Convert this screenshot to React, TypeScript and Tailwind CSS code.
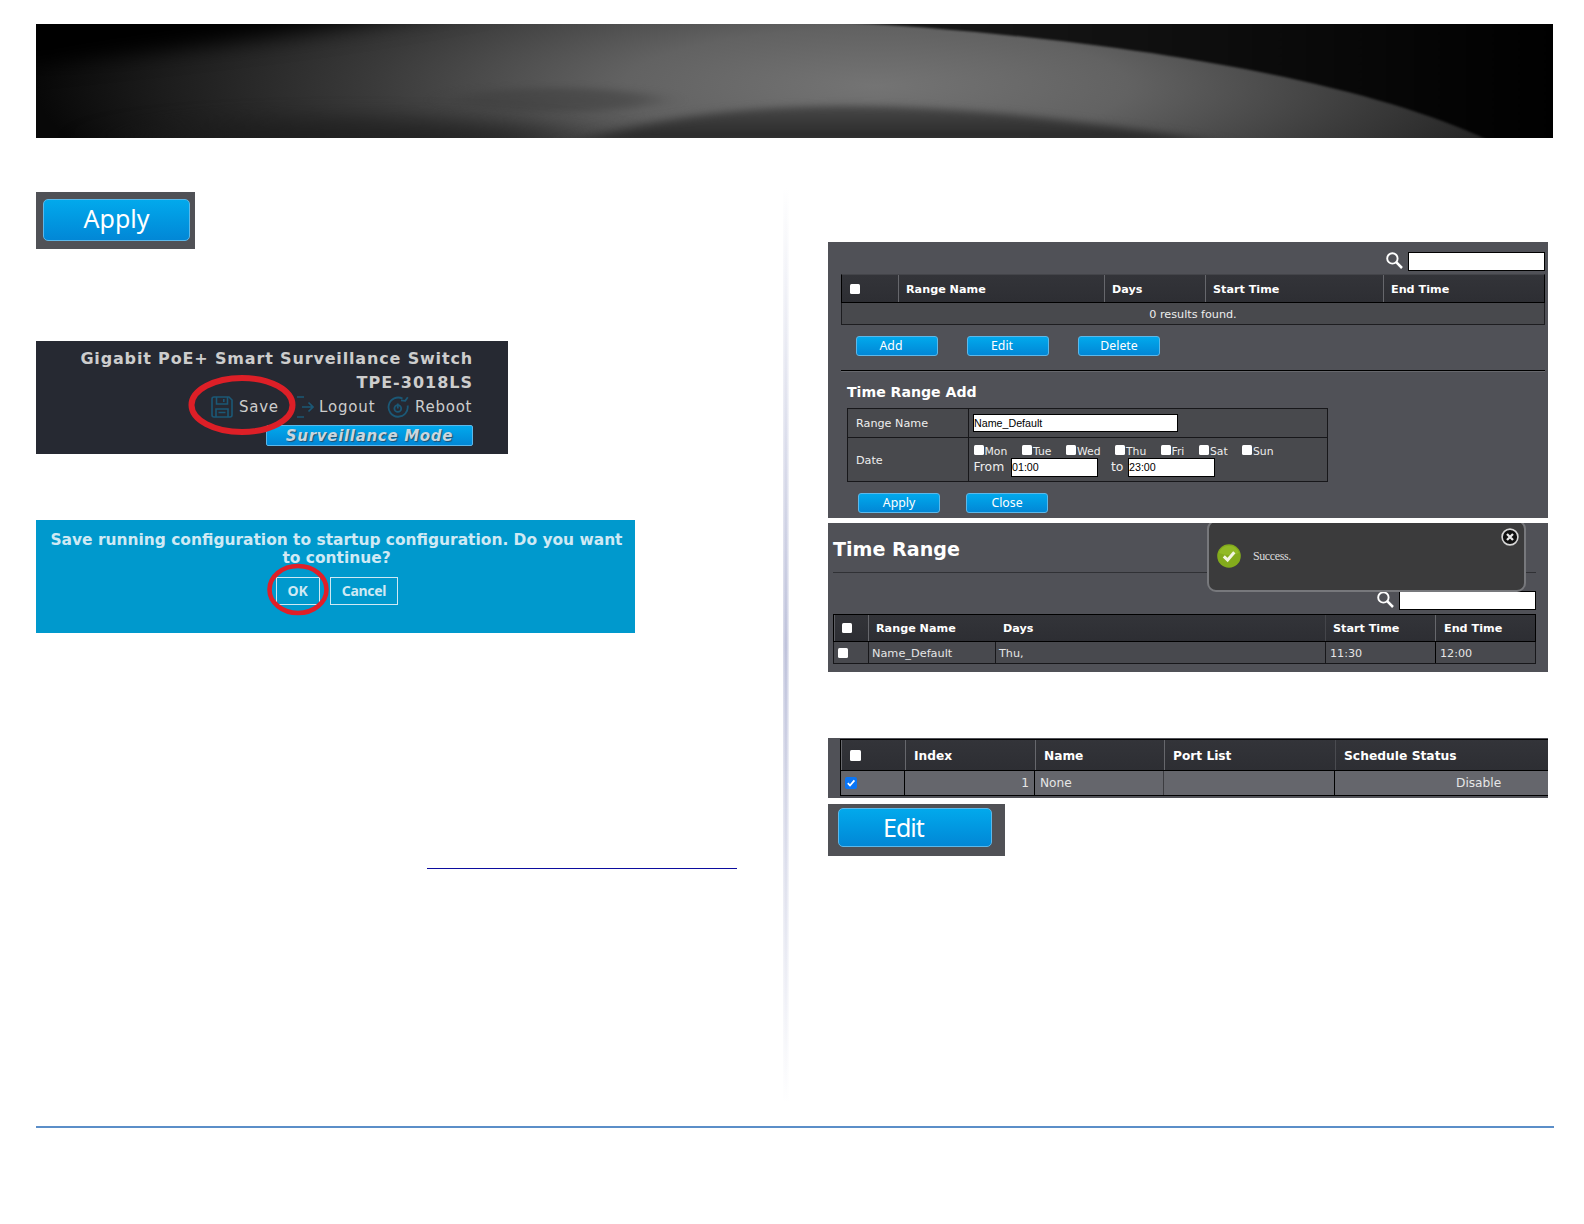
import React from 'react';
import clsx from 'clsx';

const gloss = 'bg-linear-to-b from-[#02a9ec] to-[#0287d6] border-[#5cb8ea] text-white';
const verdana = "font-['DejaVu_Sans',sans-serif]";
const tahoma = "font-['Noto_Sans',sans-serif]";

interface BoxProps {
  className?: string;
  children?: React.ReactNode;
}

// small blue action button
const ActionButton: React.FC<BoxProps> = ({ className, children }) => (
  <button
    className={clsx('flex h-[20px] w-[82px] items-center justify-center rounded-[3px] border text-[12.3px] leading-none', tahoma, gloss, className)}
  >
    {children}
  </button>
);

const Check: React.FC<BoxProps> = ({ className }) => (
  <span className={clsx('block h-[10px] w-[10px] shrink-0 rounded-[1.5px] bg-white', className)} />
);

const Field: React.FC<BoxProps> = ({ className, children }) => (
  <div
    className={clsx("flex items-center border border-black bg-white font-['Liberation_Sans',sans-serif] text-[10.7px] leading-none text-black", className)}
  >
    {children}
  </div>
);

const SearchIcon: React.FC<BoxProps> = ({ className }) => (
  <svg viewBox="0 0 17 17" className={clsx('h-[17px] w-[17px] shrink-0', className)} fill="none" stroke="#fff">
    <circle cx="6.4" cy="6.4" r="5.2" strokeWidth="1.9" />
    <path d="M10.2 10.2 L16 16" strokeWidth="2.5" />
  </svg>
);

const Banner = () => (
  <svg viewBox="0 0 1517 114" className="block h-[114px] w-[1517px] bg-black" preserveAspectRatio="none">
    <defs>
      <radialGradient id="glow" gradientUnits="userSpaceOnUse" cx="0" cy="0" r="1" gradientTransform="translate(840 62) scale(840 190)">
        <stop offset="0" stopColor="#747474" />
        <stop offset="0.3" stopColor="#626262" />
        <stop offset="0.6" stopColor="#3a3a3a" />
        <stop offset="0.85" stopColor="#1c1c1c" />
        <stop offset="1" stopColor="#080808" />
      </radialGradient>
      <linearGradient id="corner" x1="0" y1="0" x2="1" y2="0">
        <stop offset="0" stopColor="#1c1c1c" />
        <stop offset="0.5" stopColor="#0e0e0e" />
        <stop offset="1" stopColor="#000" />
      </linearGradient>
      <linearGradient id="hill" x1="0" y1="0" x2="0" y2="1">
        <stop offset="0" stopColor="#484848" />
        <stop offset="1" stopColor="#262626" />
      </linearGradient>
      <filter id="soft1" x="-20%" y="-50%" width="140%" height="200%" colorInterpolationFilters="sRGB">
        <feGaussianBlur stdDeviation="1.2" />
      </filter>
      <filter id="soft4" x="-40%" y="-100%" width="180%" height="300%" colorInterpolationFilters="sRGB">
        <feGaussianBlur stdDeviation="16 3.5" />
      </filter>
      <filter id="soft12" x="-40%" y="-150%" width="180%" height="400%" colorInterpolationFilters="sRGB">
        <feGaussianBlur stdDeviation="40 10" />
      </filter>
    </defs>
    <rect width="1517" height="114" fill="url(#glow)" />
    <path d="M-80 -40 H500 C350 2 180 22 -80 48 Z" fill="#000" filter="url(#soft12)" />
    <ellipse cx="520" cy="76" rx="100" ry="12" fill="#3c3c3c" opacity="0.5" filter="url(#soft4)" />
    <ellipse cx="320" cy="114" rx="220" ry="20" fill="#1c1c1c" opacity="0.7" filter="url(#soft12)" />
    <path d="M540 118 C680 72 890 68 1180 118 Z" fill="url(#hill)" filter="url(#soft4)" />
    <path d="M785 -3 C1080 12 1330 58 1452 116 H1530 V-3 Z" fill="url(#corner)" filter="url(#soft1)" />
  </svg>
);

const SwitchHeader = () => (
  <div className={clsx('relative mt-[92px] h-[113px] w-[472px] bg-[#262932] pr-[35px] text-[#cdcdcd]', verdana)}>
    <div className="pt-[6px] text-right text-[16px] leading-[24px] font-bold">
      <div className="tracking-[0.84px]">Gigabit PoE+ Smart Surveillance Switch</div>
      <div className="tracking-[1px]">TPE-3018LS</div>
    </div>
    <div className="flex h-[24px] items-center justify-end text-[15px] leading-none">
      <svg viewBox="0 0 22 22" className="mr-[6px] h-[22px] w-[22px]" fill="none" stroke="#1b5876" strokeWidth="1.6">
        <path d="M4 1 H18 L21 4 V19 Q21 21 19 21 H3 Q1 21 1 19 V3 Q1 1 3 1 Z" />
        <path d="M5.5 1 V8 H16.5 V1 M12.8 3 V6 M5 21 V13 H17 V21 M7.5 16.5 H14.5" />
      </svg>
      <span className="w-[57px] tracking-[0.75px]">Save</span>
      <svg viewBox="0 0 18 22" className="mr-[5px] h-[22px] w-[18px]" fill="none" stroke="#1b5876" strokeWidth="1.7">
        <path d="M1 1 H8 M1 21 H8 M6 11 H17 M12.5 6.5 L17 11 L12.5 15.5" />
      </svg>
      <span className="w-[68px] tracking-[0.85px]">Logout</span>
      <svg viewBox="0 0 22 22" className="mr-[6px] h-[22px] w-[22px]" fill="none" stroke="#1b5876" strokeWidth="1.8">
        <path d="M15.5 2.6 A9.6 9.6 0 1 0 20.6 9.5" />
        <path d="M20.8 1.2 L18.2 4.8 L14 4.4" />
        <circle cx="10.8" cy="12.5" r="3.4" />
        <path d="M10.8 7.5 V12.5" />
      </svg>
      <span className="w-[58px] tracking-[0.75px]">Reboot</span>
    </div>
    <button className={clsx('mt-[6px] ml-auto flex h-[21px] w-[207px] items-center justify-center rounded-[2px] border', gloss)}>
      <span className="pt-px text-[15px] leading-none font-bold tracking-[0.7px] text-[#c9d6de] italic [text-shadow:1px_1px_1px_#22506e]">
        Surveillance Mode
      </span>
    </button>
    <svg viewBox="0 0 110 62" className="absolute top-[33px] left-[151px] h-[62px] w-[110px]" fill="none">
      <ellipse cx="55" cy="31" rx="50.5" ry="27" stroke="#dd1f27" strokeWidth="6" />
    </svg>
  </div>
);

const SaveDialog = () => (
  <div className={clsx('relative mt-[66px] h-[113px] w-[599px] bg-[#0099cd] pt-[11px] text-center font-bold text-[#cfe9f4]', verdana)}>
    <div className="pl-[2px] text-[15.45px] leading-[18px] whitespace-nowrap">
      Save running configuration to startup configuration. Do you want
      <br />
      to continue?
    </div>
    <div className={clsx('mt-[10px] flex gap-[10px] pl-[240px] text-[14px] tracking-[-0.3px]', tahoma)}>
      <button className="h-[28px] w-[44px] border border-[#cfe9f4] pr-px leading-none">OK</button>
      <button className="h-[28px] w-[68px] border border-[#cfe9f4] leading-none">Cancel</button>
    </div>
    <svg viewBox="0 0 64 54" className="absolute top-[43px] left-[230px] h-[54px] w-[64px]" fill="none">
      <ellipse cx="32" cy="26.5" rx="28.5" ry="23.5" stroke="#e01f28" strokeWidth="4.6" />
    </svg>
  </div>
);

const days = [
  { name: 'Mon', width: 'w-[48.5px]' },
  { name: 'Tue', width: 'w-[44px]' },
  { name: 'Wed', width: 'w-[49px]' },
  { name: 'Thu', width: 'w-[45.5px]' },
  { name: 'Fri', width: 'w-[38.5px]' },
  { name: 'Sat', width: 'w-[43px]' },
  { name: 'Sun', width: 'w-[40px]' },
];

const headRow = 'flex border border-black bg-linear-to-b from-[#333439] to-[#2d2e33] font-bold text-white';

const TimeRangeAdd = () => (
  <div className={clsx('h-[276px] w-[720px] bg-[#505157] pt-[10px] pl-[13px] text-[11.2px] leading-none text-[#eee]', verdana)}>
    <div className="flex h-[22px] w-[704px] justify-end">
      <SearchIcon className="mr-[5px]" />
      <Field className="h-[19px] w-[137px]" />
    </div>
    <div className="w-[704px]">
      <div className={clsx(headRow, 'h-[29px] items-stretch border-t-[#44454a]')}>
        <div className="flex w-[56px] items-center pl-[8px]"><Check /></div>
        <div className="flex w-[206px] items-center border-l border-[#66676c] pt-[2px] pl-[7px]">Range Name</div>
        <div className="flex w-[101px] items-center border-l border-[#66676c] pt-[2px] pl-[7px]">Days</div>
        <div className="flex w-[178px] items-center border-l border-[#66676c] pt-[2px] pl-[7px]">Start Time</div>
        <div className="flex items-center border-l border-[#66676c] pt-[2px] pl-[7px]">End Time</div>
      </div>
      <div className="flex h-[22px] items-center justify-center border border-t-0 border-[#1d1d20] bg-[#48494d] pt-[2px]">0 results found.</div>
    </div>
    <div className="mt-[11px] flex gap-[29px] pl-[15px]">
      <ActionButton className="pr-[12px]">Add</ActionButton>
      <ActionButton className="pr-[12px]">Edit</ActionButton>
      <ActionButton>Delete</ActionButton>
    </div>
    <div className="mt-[14px] h-[2px] w-[704px] border-t border-b border-t-black border-b-[#66676c]" />
    <h2 className="mt-[12px] ml-[6px] text-[14.1px] leading-[16px] font-bold text-white">Time Range Add</h2>
    <div className="mt-[8px] ml-[6px] w-[481px] border border-[#17171a] bg-[#48494d]">
      <div className="flex h-[29px] border-b border-[#17171a]">
        <div className="flex w-[121px] items-center border-r border-[#17171a] pt-px pl-[8px]">Range Name</div>
        <div className="pt-[5px] pl-[4px]"><Field className="h-[18px] w-[205px]">Name_Default</Field></div>
      </div>
      <div className="flex h-[43px]">
        <div className="flex w-[121px] items-center border-r border-[#17171a] pt-[2px] pl-[8px]">Date</div>
        <div className="pt-[7px] pl-[4.5px]">
          <div className="flex h-[13px] text-[10.8px]">
            {days.map((day) => (
              <div key={day.name} className={clsx('flex', day.width)}>
                <Check className="mr-[1px]" />
                <span className="pt-[2px]">{day.name}</span>
              </div>
            ))}
          </div>
          <div className="flex text-[12.4px] font-medium">
            <span className="w-[37.5px] pt-[3px]">From</span>
            <Field className="h-[19px] w-[87px]">01:00</Field>
            <span className="ml-[13px] w-[17px] pt-[3px]">to</span>
            <Field className="h-[19px] w-[87px]">23:00</Field>
          </div>
        </div>
      </div>
    </div>
    <div className="mt-[11px] flex gap-[26px] pl-[17px]">
      <ActionButton>Apply</ActionButton>
      <ActionButton>Close</ActionButton>
    </div>
  </div>
);

const TimeRangeList = () => (
  <div className={clsx('relative mt-[5px] h-[149px] w-[720px] overflow-hidden bg-[#505157] pl-[5px] text-[11.2px] leading-none text-[#e6e6e6]', verdana)}>
    <h1 className="pt-[15px] text-[19.1px] leading-[24px] font-bold text-white">Time Range</h1>
    <div className="mt-[10px] h-px w-[703px] bg-[#303135]" />
    <div className="mt-[18px] flex h-[23px] w-[703px] justify-end">
      <SearchIcon className="mr-[5px]" />
      <Field className="h-[19px] w-[137px]" />
    </div>
    <div className="w-[703px]">
      <div className={clsx(headRow, 'h-[28px]')}>
        <div className="flex w-[34px] items-center border-l border-[#5c5d62] pl-[7px]"><Check /></div>
        <div className="flex w-[127px] items-center border-l border-[#66676c] pt-px pl-[7px]">Range Name</div>
        <div className="flex w-[330px] items-center pt-px pl-[8px]">Days</div>
        <div className="flex w-[110px] items-center border-l border-[#44454a] pt-px pl-[7px]">Start Time</div>
        <div className="flex items-center border-l border-[#66676c] pt-px pl-[8px]">End Time</div>
      </div>
      <div className="flex h-[22px] border border-t-0 border-[#17171a] bg-[#48494e]">
        <div className="flex w-[34px] items-center pl-[4px]"><Check /></div>
        <div className="flex w-[127px] items-center border-l border-[#17171a] pt-[2px] pl-[3px] text-[11.3px]">Name_Default</div>
        <div className="flex w-[330px] items-center border-l border-[#17171a] pt-[2px] pl-[3px]">Thu,</div>
        <div className="flex w-[110px] items-center border-l border-[#17171a] pt-[2px] pl-[4px]">11:30</div>
        <div className="flex items-center border-l border-black pt-[2px] pl-[4px]">12:00</div>
      </div>
    </div>
    {/* toast over the list */}
    <div className="absolute -top-[3px] left-[379px] flex h-[72px] w-[319px] rounded-[9px] border-2 border-[#77787c] bg-[#3b3b3c]">
      <svg viewBox="0 0 24 24" className="mt-[22px] ml-[8px] h-[24px] w-[24px]">
        <circle cx="12" cy="12" r="11.8" fill="#83ab1c" />
        <path d="M2 9 A10.5 10.5 0 0 1 22 9 Q12 13 2 9" fill="#9bc42c" opacity="0.6" />
        <path d="M6.8 12.4 L10.6 16 L17.3 8.2" fill="none" stroke="#f2f5e2" strokeWidth="3" />
      </svg>
      <span className="mt-[28px] ml-[12px] font-['Liberation_Serif',serif] text-[12px] tracking-[-0.4px] text-[#dcdcdc]">Success.</span>
      <svg viewBox="0 0 18 18" className="absolute top-[6px] left-[292px] h-[18px] w-[18px]">
        <circle cx="9" cy="9" r="7.9" fill="#111" stroke="#d8d8d8" strokeWidth="1.6" />
        <path d="M6 6 L12 12 M12 6 L6 12" stroke="#e8e8e8" strokeWidth="2.3" />
      </svg>
    </div>
  </div>
);

const PortSchedule = () => (
  <div className={clsx('mt-[66px] h-[60px] w-[720px] overflow-hidden bg-[#505157] pt-px pl-[12px] text-[12.2px] leading-none text-[#e6e6e6]', verdana)}>
    <div className={clsx(headRow, 'h-[32px] border-r-0')}>
      <div className="flex w-[64px] items-center border-l border-[#66676c] pl-[8px]"><Check className="h-[11px] w-[11px]" /></div>
      <div className="flex w-[130px] items-center border-l border-[#66676c] pt-[2px] pl-[8px]">Index</div>
      <div className="flex w-[129px] items-center border-l border-[#66676c] pt-[2px] pl-[8px]">Name</div>
      <div className="flex w-[171px] items-center border-l border-[#66676c] pt-[2px] pl-[8px]">Port List</div>
      <div className="flex items-center border-l border-[#4a4b50] pt-[2px] pl-[8px] text-[12.3px]">Schedule Status</div>
    </div>
    <div className="flex h-[25px] border-b border-l border-black bg-[#65666c]">
      <div className="flex w-[63px] items-center pl-[4px]">
        <svg viewBox="0 0 12 12" className="h-[12px] w-[12px]">
          <rect width="12" height="12" rx="2" fill="#0a75f5" />
          <path d="M2.8 6.2 L5 8.5 L9.4 3.4" fill="none" stroke="#fff" strokeWidth="1.8" />
        </svg>
      </div>
      <div className="flex w-[130px] items-center justify-end border-l border-black pt-px pr-[5px]">1</div>
      <div className="flex w-[129px] items-center border-l border-black pt-px pl-[5px]">None</div>
      <div className="w-[171px] border-l border-[#3c3c40]" />
      <div className="flex flex-1 items-center border-l border-black pt-px pl-[121px]">Disable</div>
    </div>
  </div>
);

export default function App() {
  return (
    <div className="h-[1224px] w-[1584px] overflow-hidden bg-white pt-[24px] pl-[36px]">
      <Banner />
      <div className="flex h-[988px]">
        <div className="w-[747px] pt-[54px]">
          <div className="h-[57px] w-[159px] bg-[#505156] pt-[7px] pl-[7px]">
            <button className={clsx('flex h-[42px] w-[147px] items-center justify-center rounded-[5px] border pb-[4px] text-[25px] leading-none', tahoma, gloss)}>
              Apply
            </button>
          </div>
          <SwitchHeader />
          <SaveDialog />
          <div className="mt-[235px] ml-[391px] h-px w-[310px] bg-[#0c0c9e]" />
        </div>
        <div className="mt-[50px] h-[915px] w-[6px] bg-linear-to-b from-white via-[#b9bdd8] to-white">
          <div className="h-full w-full bg-linear-to-r from-white/50 via-transparent to-white/75" />
        </div>
        <div className="pt-[104px] pl-[39px]">
          <TimeRangeAdd />
          <TimeRangeList />
          <PortSchedule />
          <div className="mt-[6px] h-[52px] w-[177px] bg-[#505156] pt-[4px] pl-[10px]">
            <button className={clsx('flex h-[39px] w-[154px] items-center rounded-[5px] border pb-px pl-[44px] text-[25px] leading-none tracking-[-1px]', tahoma, gloss)}>
              Edit
            </button>
          </div>
        </div>
      </div>
      <div className="h-[2px] w-[1518px] bg-[#5b8ec8]" />
    </div>
  );
}
